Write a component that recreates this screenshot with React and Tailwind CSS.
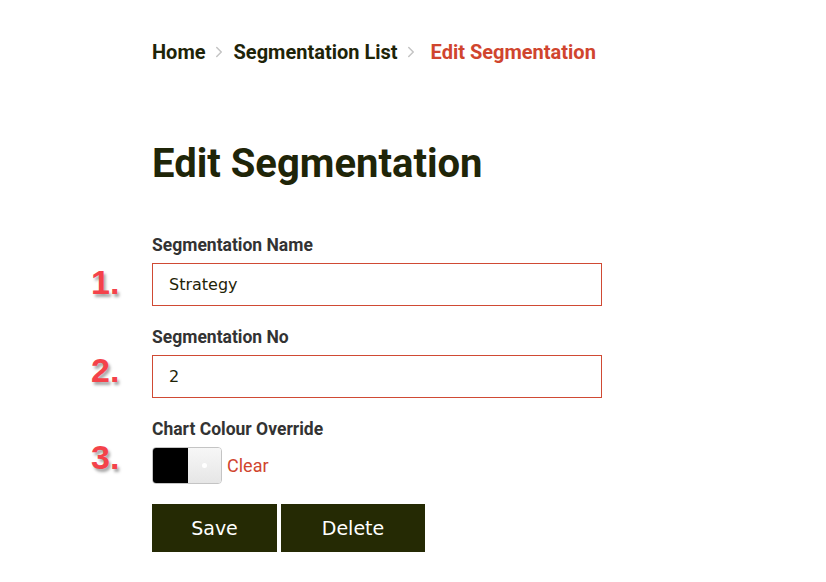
import React, { useState } from "react";
import { ChevronRight } from "lucide-react";

const Marker = ({ n, className }) => (
  <span
    className={`absolute left-[-61px] font-['Liberation_Sans',Arial,sans-serif] text-[34px] font-bold leading-none text-[#f4424a] [text-shadow:2px_3px_3px_rgba(0,0,0,0.35)] ${className}`}
  >
    {n}.
  </span>
);

const Label = ({ children }) => (
  <label className="mb-2 block text-[17.5px] leading-[20px] font-bold text-[#333333]">
    {children}
  </label>
);

const TextField = ({ value, onChange }) => (
  <input
    value={value}
    onChange={onChange}
    className="h-[43px] w-[450px] border border-[#d04a34] bg-white px-4 font-['DejaVu_Sans',sans-serif] text-[16px] text-[#1f2308] outline-none"
  />
);

const EditSegmentation = () => {
  const [name, setName] = useState("Strategy");
  const [number, setNumber] = useState("2");

  return (
    <div className="min-h-screen bg-white font-['Roboto','Liberation_Sans',sans-serif]">
      <div className="ml-[152px] pt-[40px]">
        {/* breadcrumb */}
        <nav className="flex items-center text-[20px] leading-[24px] font-bold">
          <span className="text-[#1e2408]">Home</span>
          <ChevronRight className="ml-[4px] mr-[6px] h-[18px] w-[18px] text-[#c4c4c4]" strokeWidth={2} />
          <span className="text-[#1e2408]">Segmentation List</span>
          <ChevronRight className="ml-[4px] mr-[11px] h-[18px] w-[18px] text-[#c4c4c4]" strokeWidth={2} />
          <span className="text-[#d0452e]">Edit Segmentation</span>
        </nav>

        <h1 className="mt-[75px] text-[40px] leading-[50px] font-bold text-[#1f2508]">
          Edit Segmentation
        </h1>

        <form className="mt-[46px]" onSubmit={(e) => e.preventDefault()}>
          <Label>Segmentation Name</Label>
          <div className="relative">
            <Marker n="1" className="top-[2px]" />
            <TextField value={name} onChange={(e) => setName(e.target.value)} />
          </div>

          <div className="mt-[21px]">
            <Label>Segmentation No</Label>
            <div className="relative">
              <Marker n="2" className="top-[-2px]" />
              <TextField value={number} onChange={(e) => setNumber(e.target.value)} />
            </div>
          </div>

          <div className="mt-[21px]">
            <Label>Chart Colour Override</Label>
            <div className="relative flex items-center">
              <Marker n="3" className="top-[-7px]" />
              <div className="flex h-[37px] w-[70px] overflow-hidden rounded-[4px] border border-[#c4c4c4]">
                <div className="w-[35px] bg-black" />
                <div className="flex flex-1 items-center justify-center bg-gradient-to-b from-[#f7f7f7] to-[#e6e6e6]">
                  <div className="h-[5px] w-[5px] rounded-full bg-white" />
                </div>
              </div>
              <button type="button" className="ml-[5px] text-[18px] leading-none text-[#d0452e]">
                Clear
              </button>
            </div>
          </div>

          <div className="mt-[20px] flex gap-[4px] font-['DejaVu_Sans',sans-serif] text-[19px] text-white">
            <button type="submit" className="h-[48px] w-[125px] bg-[#252a04]">
              Save
            </button>
            <button type="button" className="h-[48px] w-[144px] bg-[#252a04]">
              Delete
            </button>
          </div>
        </form>
      </div>
    </div>
  );
};

export default function App() {
  return <EditSegmentation />;
}
